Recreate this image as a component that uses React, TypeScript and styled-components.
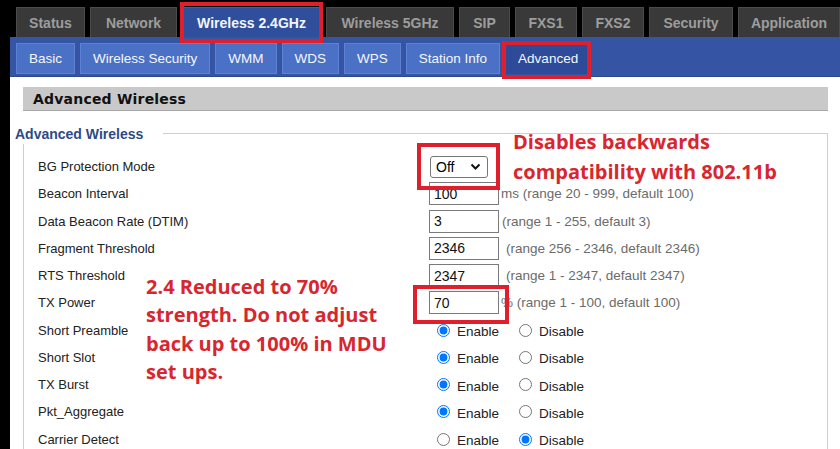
import React from 'react'
import styled, { createGlobalStyle } from 'styled-components'

const GlobalStyle = createGlobalStyle`
  html, body {
    margin: 0;
    padding: 0;
    background: #000;
  }
`

const Page = styled.div`
  position: relative;
  width: 840px;
  height: 449px;
  overflow: hidden;
  background: #000;
  font-family: 'Liberation Sans', Arial, sans-serif;
`

const MainTabs = styled.div`
  display: flex;
  gap: 5px;
  height: 30px;
  padding: 7px 0 0 16px;
`

const MainTab = styled.div<{ $active?: boolean; $w: number }>`
  flex: none;
  display: flex;
  align-items: center;
  justify-content: center;
  box-sizing: border-box;
  width: ${(p) => p.$w}px;
  height: 30px;
  background: ${(p) => (p.$active ? '#2f4f9c' : '#393939')};
  border: 1px solid ${(p) => (p.$active ? '#3d5dad' : '#4b4b4b')};
  border-bottom: none;
  color: ${(p) => (p.$active ? '#f3f5fb' : '#9d9d9d')};
  font-size: 14px;
  font-weight: bold;
  white-space: nowrap;
`

const Frame = styled.div`
  margin-left: 10px;
  height: 412px;
  background: #fff;
`

const SubNav = styled.div`
  display: flex;
  gap: 5px;
  box-sizing: border-box;
  height: 40px;
  padding: 6px 0 0 6px;
  background: #3554a4;
  border-bottom: 1px solid #2c478f;
`

const SubTab = styled.div<{ $active?: boolean }>`
  flex: none;
  display: flex;
  align-items: center;
  box-sizing: border-box;
  height: 31px;
  padding: 0 12px;
  background: ${(p) => (p.$active ? '#2e4b99' : '#4a71c5')};
  border: 1px solid ${(p) => (p.$active ? '#2e4b99' : '#5d82d3')};
  color: #f6f7fb;
  font-size: 13.5px;
  white-space: nowrap;
`

const Content = styled.div`
  padding-top: 10px;
`

const SectionBar = styled.div`
  display: flex;
  align-items: center;
  box-sizing: border-box;
  width: 805px;
  height: 24px;
  margin-left: 13px;
  padding-left: 10px;
  background: #c9c9c9;
  border-bottom: 1px solid #a8a8a8;
  color: #111;
  font-family: 'DejaVu Sans', Verdana, sans-serif;
  font-size: 14px;
  font-weight: bold;
  letter-spacing: 0.2px;
`

const Fieldset = styled.div`
  position: relative;
  box-sizing: border-box;
  width: 805px;
  margin: 22px 0 0 13px;
  padding: 19px 0 0 14px;
  border: 1px solid #cfcfcf;
  border-bottom: none;
`

const Legend = styled.div`
  position: absolute;
  top: -9px;
  left: -9px;
  height: 19px;
  padding-right: 20px;
  background: #fff;
  color: #2d4a86;
  font-size: 14px;
  font-weight: bold;
  line-height: 19px;
`

const Row = styled.div`
  display: grid;
  grid-template-columns: 391px auto;
  align-items: center;
  height: 27.25px;
`

const Label = styled.div`
  color: #222;
  font-size: 13px;
`

const Value = styled.div`
  display: flex;
  align-items: center;
`

const SelectWrap = styled.span`
  position: relative;
  display: inline-flex;
  margin-left: 1px;
`

const Select = styled.select`
  appearance: none;
  box-sizing: border-box;
  width: 58px;
  height: 22px;
  margin: 0;
  padding: 0 0 0 5px;
  border: 1px solid #767676;
  border-radius: 3px;
  background: #fff;
  font-family: 'Liberation Sans', Arial, sans-serif;
  font-size: 14px;
  color: #000;
`

const Chevron = styled.svg`
  position: absolute;
  right: 7px;
  top: 7px;
  pointer-events: none;
`

const TextInput = styled.input`
  box-sizing: border-box;
  width: 70px;
  height: 23px;
  margin: 0;
  padding: 0 4px;
  border: 1px solid #7a7a7a;
  font-family: 'Liberation Sans', Arial, sans-serif;
  font-size: 14px;
  color: #111;
`

const Hint = styled.span<{ $gap?: number }>`
  margin-left: ${(p) => p.$gap ?? 2}px;
  color: #6b6b6b;
  font-size: 13.5px;
  white-space: nowrap;
`

const Radio = styled.input.attrs({ type: 'radio' })<{ $first?: boolean }>`
  width: 13px;
  height: 13px;
  margin: 0 7px 0 ${(p) => (p.$first ? 8 : 20)}px;
`

const RadioText = styled.span`
  color: #222;
  font-size: 13.5px;
  padding-top: 3px;
`

const Note = styled.div<{ $lh: number }>`
  position: absolute;
  color: #d8262f;
  font-family: 'Open Sans', 'Liberation Sans', sans-serif;
  font-size: 20px;
  font-weight: bold;
  line-height: ${(p) => p.$lh}px;
  white-space: nowrap;
`

const Highlight = styled.div`
  position: absolute;
  box-sizing: border-box;
  border: 4px solid #e01f2c;
  pointer-events: none;
`

const mainTabs = [
  { name: 'Status', w: 69 },
  { name: 'Network', w: 87 },
  { name: 'Wireless 2.4GHz', w: 139, active: true },
  { name: 'Wireless 5GHz', w: 128 },
  { name: 'SIP', w: 51 },
  { name: 'FXS1', w: 62 },
  { name: 'FXS2', w: 62 },
  { name: 'Security', w: 84 },
  { name: 'Application', w: 102 },
]
const subTabs = ['Basic', 'Wireless Security', 'WMM', 'WDS', 'WPS', 'Station Info', 'Advanced']

const numberRows = [
  { label: 'Beacon Interval', value: '100', hint: 'ms (range 20 - 999, default 100)', gap: 2 },
  { label: 'Data Beacon Rate (DTIM)', value: '3', hint: '(range 1 - 255, default 3)', gap: 3 },
  { label: 'Fragment Threshold', value: '2346', hint: '(range 256 - 2346, default 2346)', gap: 7 },
  { label: 'RTS Threshold', value: '2347', hint: '(range 1 - 2347, default 2347)', gap: 7 },
  { label: 'TX Power', value: '70', hint: '% (range 1 - 100, default 100)', gap: 2 },
]

const switchRows = [
  { label: 'Short Preamble', on: true },
  { label: 'Short Slot', on: true },
  { label: 'TX Burst', on: true },
  { label: 'Pkt_Aggregate', on: true },
  { label: 'Carrier Detect', on: false },
]

export default function App() {
  return (
    <Page>
      <GlobalStyle />
      <MainTabs>
        {mainTabs.map((t) => (
          <MainTab key={t.name} $w={t.w} $active={t.active}>
            {t.name}
          </MainTab>
        ))}
      </MainTabs>
      <Frame>
        <SubNav>
          {subTabs.map((t) => (
            <SubTab key={t} $active={t === 'Advanced'}>
              {t}
            </SubTab>
          ))}
        </SubNav>
        <Content>
          <SectionBar>Advanced Wireless</SectionBar>
          <Fieldset>
            <Legend>Advanced Wireless</Legend>
            <Row>
              <Label>BG Protection Mode</Label>
              <Value>
                <SelectWrap>
                  <Select defaultValue="off">
                    <option value="off">Off</option>
                    <option value="auto">Auto</option>
                    <option value="on">On</option>
                  </Select>
                  <Chevron width="11" height="8" viewBox="0 0 11 8">
                    <path d="M1.5 1.5 L5.5 5.5 L9.5 1.5" fill="none" stroke="#111" strokeWidth="2" />
                  </Chevron>
                </SelectWrap>
              </Value>
            </Row>
            {numberRows.map((r) => (
              <Row key={r.label}>
                <Label>{r.label}</Label>
                <Value>
                  <TextInput defaultValue={r.value} />
                  <Hint $gap={r.gap}>{r.hint}</Hint>
                </Value>
              </Row>
            ))}
            {switchRows.map((r) => (
              <Row key={r.label}>
                <Label>{r.label}</Label>
                <Value>
                  <Radio $first name={r.label} defaultChecked={r.on} />
                  <RadioText>Enable</RadioText>
                  <Radio name={r.label} defaultChecked={!r.on} />
                  <RadioText>Disable</RadioText>
                </Value>
              </Row>
            ))}
          </Fieldset>
        </Content>
      </Frame>

      <Highlight style={{ left: 180, top: 2, width: 143, height: 41 }} />
      <Highlight style={{ left: 502, top: 41, width: 89, height: 38 }} />
      <Highlight style={{ left: 417, top: 143, width: 83, height: 47 }} />
      <Highlight style={{ left: 413, top: 285, width: 96, height: 39 }} />

      <Note $lh={30} style={{ left: 513, top: 127 }}>
        Disables backwards
        <br />
        compatibility with 802.11b
      </Note>
      <Note $lh={28.3} style={{ left: 146, top: 273 }}>
        2.4 Reduced to 70%
        <br />
        strength. Do not adjust
        <br />
        back up to 100% in MDU
        <br />
        set ups.
      </Note>
    </Page>
  )
}
